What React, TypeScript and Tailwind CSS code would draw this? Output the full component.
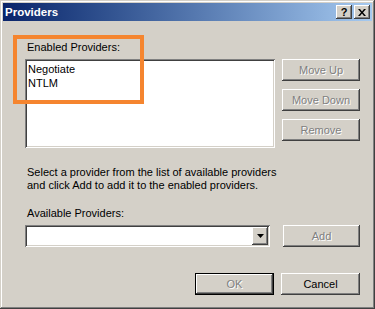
const raised =
  'shadow-[inset_-1px_-1px_#404040,inset_1px_1px_#ffffff,inset_-2px_-2px_#808080,inset_2px_2px_#d4d0c8]';
const sunken =
  'shadow-[inset_1px_1px_#808080,inset_-1px_-1px_#ffffff,inset_2px_2px_#404040,inset_-2px_-2px_#d4d0c8]';

function WinButton({ text, disabled, def, className }: { text: string; disabled?: boolean; def?: boolean; className?: string }) {
  return (
    <div
      className={`${className ?? ''} flex items-center justify-center bg-[#d4d0c8] ${
        def ? 'border border-black' : ''
      }`}
    >
      <div className={`flex h-full w-full items-center justify-center ${raised}`}>
        <span
          className={
            disabled ? 'text-[#808080] [text-shadow:1px_1px_0_#ffffff]' : 'text-black'
          }
        >
          {text}
        </span>
      </div>
    </div>
  );
}

export default function App() {
  return (
    <div
      className="relative h-[309px] w-[375px] overflow-hidden bg-[#d4d0c8] p-[3px] text-[11px] leading-[13px] text-black shadow-[inset_-1px_-1px_#404040,inset_1px_1px_#d4d0c8,inset_-2px_-2px_#808080,inset_2px_2px_#ffffff]"
      style={{ fontFamily: '"Liberation Sans", Arial, sans-serif' }}
    >
      {/* title bar */}
      <div className="flex h-[18px] items-center justify-between bg-gradient-to-r from-[#0a246a] to-[#a6caf0] pl-[2px] pr-[2px]">
        <span className="text-[11.5px] font-bold text-white">Providers</span>
        <div className="flex gap-[2px]">
          <div className={`flex h-[14px] w-[16px] items-center justify-center bg-[#d4d0c8] text-[11px] font-bold leading-none ${raised}`}>
            ?
          </div>
          <div className={`flex h-[14px] w-[16px] items-center justify-center bg-[#d4d0c8] ${raised}`}>
            <svg width="8" height="7" viewBox="0 0 8 7">
              <path d="M0 0h2l2 2.5L6 0h2L5 3.5 8 7H6L4 4.5 2 7H0l3-3.5z" fill="#000" />
            </svg>
          </div>
        </div>
      </div>

      <div className="flex flex-col pl-[22px] pr-[12px]">
        <div className="mt-[20px] ml-[2px]">Enabled Providers:</div>

        <div className="mt-[5px] flex">
          <div className={`h-[89px] w-[250px] bg-white px-[3px] py-[3px] ${sunken}`}>
            <div className="leading-[14px]">Negotiate</div>
            <div className="leading-[14px]">NTLM</div>
          </div>
          <div className="ml-[7px] flex w-[78px] flex-col gap-[8px]">
            <WinButton text="Move Up" disabled className="h-[22px]" />
            <WinButton text="Move Down" disabled className="h-[22px]" />
            <WinButton text="Remove" disabled className="h-[22px]" />
          </div>
        </div>

        <div className="mt-[18px] ml-[2px]">
          <div>Select a provider from the list of available providers</div>
          <div>and click Add to add it to the enabled providers.</div>
        </div>

        <div className="mt-[15px] ml-[2px]">Available Providers:</div>

        <div className="mt-[5px] flex items-center">
          <div className={`flex h-[22px] w-[245px] items-center justify-end bg-white p-[2px] ${sunken}`}>
            <div className={`flex h-[18px] w-[16px] items-center justify-center bg-[#d4d0c8] ${raised}`}>
              <svg width="7" height="4" viewBox="0 0 7 4">
                <path d="M0 0h7L3.5 4z" fill="#000" />
              </svg>
            </div>
          </div>
          <WinButton text="Add" disabled className="ml-[13px] h-[22px] w-[77px]" />
        </div>

        <div className="mt-[26px] flex justify-end gap-[7px]">
          <WinButton text="OK" disabled def className="h-[22px] w-[79px]" />
          <WinButton text="Cancel" className="h-[22px] w-[79px]" />
        </div>
      </div>

      {/* annotation highlight */}
      <div className="absolute left-[13px] top-[35px] h-[69px] w-[131px] border-[4px] border-[#f5852f]" />
    </div>
  );
}
